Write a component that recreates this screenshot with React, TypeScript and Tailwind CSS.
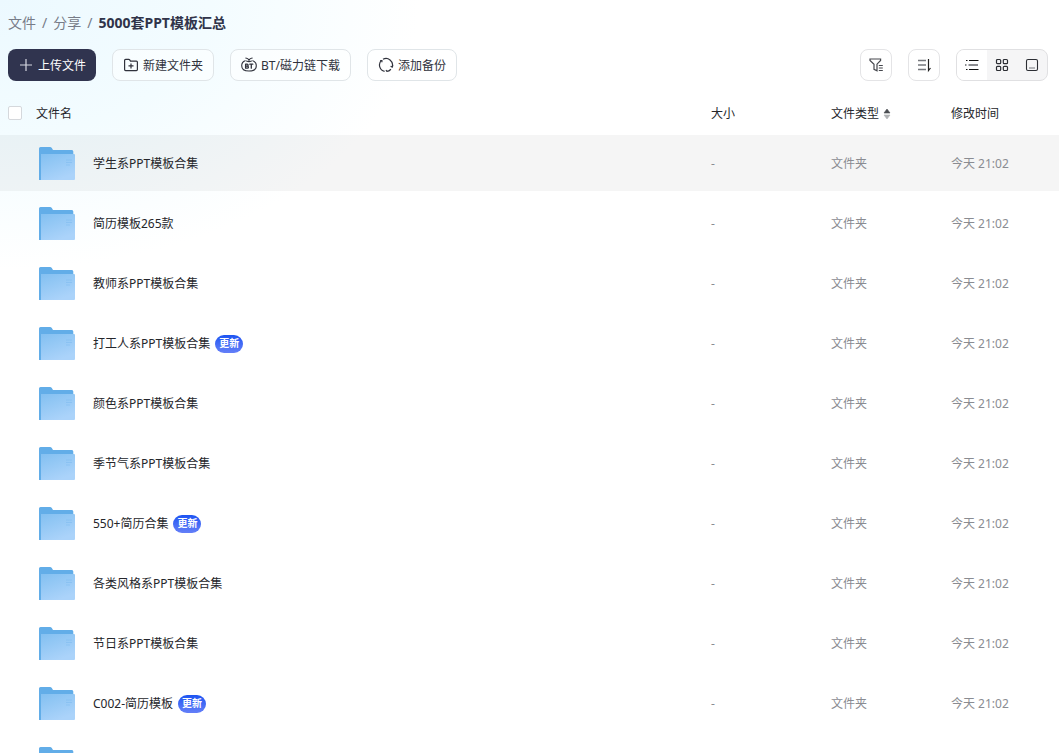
import { useState } from "react";

type FileItem = {
  id: number;
  name: string;
  size: string;
  type: string;
  time: string;
  updated?: boolean;
};

const folder = (id: number, name: string, updated = false): FileItem => ({
  id,
  name,
  size: "-",
  type: "文件夹",
  time: "今天 21:02",
  updated,
});

const FILES: FileItem[] = [
  folder(1, "学生系PPT模板合集"),
  folder(2, "简历模板265款"),
  folder(3, "教师系PPT模板合集"),
  folder(4, "打工人系PPT模板合集", true),
  folder(5, "颜色系PPT模板合集"),
  folder(6, "季节气系PPT模板合集"),
  folder(7, "550+简历合集", true),
  folder(8, "各类风格系PPT模板合集"),
  folder(9, "节日系PPT模板合集"),
  folder(10, "C002-简历模板", true),
  { id: 11, name: "", size: "", type: "", time: "" },
];

// --- 图标 ---

const PlusIcon = () => (
  <svg width="16" height="16" viewBox="0 0 16 16" fill="none" stroke="#d5d8e2" strokeWidth="1.2">
    <path d="M8 2v12M2 8h12" />
  </svg>
);

const NewFolderIcon = () => (
  <svg width="16" height="16" viewBox="0 0 16 16" fill="none" stroke="currentColor" strokeWidth="1.2">
    <path d="M1.6 12.6V3.4c0-.6.4-1 1-1h3.2c.4 0 .7.2.9.5l.8 1.2h5.9c.6 0 1 .4 1 1v7.5c0 .6-.4 1-1 1H2.6c-.6 0-1-.4-1-1z" />
    <path d="M8 6.4v5M5.5 8.9h5" />
  </svg>
);

const BtIcon = () => (
  <svg width="16" height="16" viewBox="0 0 16 16" fill="none" stroke="currentColor" strokeWidth="1.1" strokeLinecap="round">
    <path d="M4.8 1c1.4.2 2.4.8 3.200 1.900C8.800 1.800 9.800 1.200 11.200 1M8 3v1.200" />
    <path d="M4.200 3.800C2 4.600.7 6.500.7 8.700c0 3.300 2.800 5.300 7.300 5.300s7.300-2 7.300-5.300c0-2.200-1.300-4.100-3.500-4.900M5.600 4.100c1.500.7 3.300.7 4.800 0" />
    <path d="M4.600 7.200v4M4.600 7.200h1.500c1.400 0 1.400 1.900 0 1.900H4.600h1.700c1.500 0 1.500 2.100 0 2.100H4.600M8.800 7.200h3M10.300 7.200v4" strokeWidth="1.300" />
  </svg>
);

const BackupIcon = () => (
  <svg width="16" height="16" viewBox="0 0 16 16" fill="none" stroke="currentColor" strokeWidth="1.2">
    <path d="M6.600 14.350A6.500 6.500 0 0 1 3.400 3.400M5 2.240a6.500 6.500 0 0 1 9.300 7.400M12.900 12.250a6.500 6.500 0 0 1-4.300 2.200" />
    <path d="M2.200 3.500h1.700v1.700M14.900 8.300l-.7 1.800-1.600-.8M8 13l.9 1.500" />
  </svg>
);

const FilterIcon = () => (
  <svg width="16" height="16" viewBox="0 0 16 16" fill="none" stroke="#45474d" strokeWidth="1.2">
    <path d="M2 2h10.600v1.400L9 7.200v6.600L6 12.300V7.200L2 3.400z" />
    <path d="M10.800 8.500h4M10.800 11h4M10.800 13.500h4" />
  </svg>
);

const SortIcon = () => (
  <svg width="16" height="16" viewBox="0 0 16 16" fill="none">
    <path d="M2 3.500h8M2 8h8M2 12.500h8" stroke="#76787d" strokeWidth="1.300" />
    <path d="M12.500 2v11.500l2-2.500" stroke="#222" strokeWidth="1.200" />
  </svg>
);

const ListIcon = () => (
  <svg width="16" height="16" viewBox="0 0 16 16" fill="none" strokeWidth="1">
    <path d="M2 3.500h1.500M5 3.500h9.500M2 12.500h1.500M5 12.500h9.500" stroke="#111" />
    <path d="M1 8h1.500M4.500 8h9.500" stroke="#65676c" strokeWidth="1.300" />
  </svg>
);

const GridIcon = () => (
  <svg width="16" height="16" viewBox="0 0 16 16" fill="none" stroke="#2b2d33" strokeWidth="1.200">
    <rect x="2.500" y="2.500" width="4.200" height="4.200" rx="1" />
    <rect x="9.300" y="2.500" width="4.200" height="4.200" rx="1" />
    <rect x="2.500" y="9.300" width="4.200" height="4.200" rx="1" />
    <rect x="9.300" y="9.300" width="4.200" height="4.200" rx="1" />
  </svg>
);

const PreviewIcon = () => (
  <svg width="16" height="16" viewBox="0 0 16 16" fill="none" stroke="#2b2d33" strokeWidth="1.100">
    <rect x="2.500" y="2.500" width="11" height="11" rx="1.500" />
    <path d="M5 11h6" stroke="#75777c" />
  </svg>
);

const FolderIcon = () => (
  <svg className="shrink-0" width="36" height="34" viewBox="0 0 36 34">
    <defs>
      <linearGradient id="folderFront" x1="0" y1="0" x2="0.5" y2="1">
        <stop offset="0" stopColor="#83c0f1" />
        <stop offset="1" stopColor="#abd3fa" />
      </linearGradient>
    </defs>
    <path d="M0 33V1.500Q0 0 1.500 0H11Q12.200 0 12.800 1L14 3H33Q34.300 3 34.300 4.500V33H0z" fill="#62ade8" />
    <path d="M2 33V7H35Q36 7 36 8V32Q36 33 35 33H2z" fill="url(#folderFront)" />
    <path d="M27 13h6M27 15.500h6M27 18h4" stroke="#7ab8ee" strokeWidth=".5" />
  </svg>
);

const SorterIcon = () => (
  <svg width="8" height="12" viewBox="0 0 8 12">
    <path d="M4 1L7 5H1z" fill="#4b4d52" stroke="#4b4d52" strokeWidth=".6" strokeLinejoin="round" />
    <path d="M4 11L7 7H1z" fill="#b0b1b4" stroke="#b0b1b4" strokeWidth=".6" strokeLinejoin="round" />
  </svg>
);

const VIEWS = [
  { key: "list", label: "列表", Icon: ListIcon },
  { key: "grid", label: "网格", Icon: GridIcon },
  { key: "preview", label: "预览", Icon: PreviewIcon },
];

const ACTIONS = [
  { label: "新建文件夹", Icon: NewFolderIcon },
  { label: "BT/磁力链下载", Icon: BtIcon },
  { label: "添加备份", Icon: BackupIcon },
];

export default function App() {
  const [view, setView] = useState("list");
  const [activeId, setActiveId] = useState(1);

  return (
    <div
      lang="zh-CN"
      className="h-screen overflow-hidden bg-white bg-[radial-gradient(ellipse_420px_270px_at_0_0,#ecf9ff_0%,#f3fcff_50%,#ffffff_100%)] font-['Noto_Sans','Noto_Sans_CJK_SC',sans-serif] text-xs text-[#25262b]"
    >
      {/* 面包屑 */}
      <nav className="mb-[15px] flex h-[34px] items-center gap-[6px] pt-3 pl-2 text-sm text-[#777c88]">
        <a href="#files">文件</a>
        <span>/</span>
        <a href="#share">分享</a>
        <span>/</span>
        <h1 className="font-bold text-[#30344a]">5000套PPT模板汇总</h1>
      </nav>

      {/* 工具栏 */}
      <div className="mb-[10px] flex items-center justify-between pr-[11px] pl-2">
        <div className="flex gap-4">
          <button className="flex h-8 items-center gap-1 rounded-lg bg-[#30344f] px-[10px] text-white">
            <PlusIcon />
            <span className="pt-0.5">上传文件</span>
          </button>
          {ACTIONS.map(({ label, Icon }) => (
            <button
              key={label}
              className="flex h-8 items-center gap-1 rounded-lg border border-[#e0e5e8] bg-white/50 px-[10px] text-[#30323c]"
            >
              <Icon />
              <span className="pt-0.5">{label}</span>
            </button>
          ))}
        </div>

        <div className="flex gap-4">
          <button aria-label="筛选" className="flex size-8 items-center justify-center rounded-lg border border-[#e4e4e6] bg-white">
            <FilterIcon />
          </button>
          <button aria-label="排序" className="flex size-8 items-center justify-center rounded-lg border border-[#e4e4e6] bg-white">
            <SortIcon />
          </button>
          <div className="flex h-8 overflow-hidden rounded-lg border border-[#e0e0e2] bg-[#f5f5f6]">
            {VIEWS.map(({ key, label, Icon }) => (
              <button
                key={key}
                aria-label={label}
                onClick={() => setView(key)}
                className={`flex w-[30px] items-center justify-center ${view === key ? "bg-white" : ""}`}
              >
                <Icon />
              </button>
            ))}
          </div>
        </div>
      </div>

      {/* 文件列表 */}
      <table className="w-full table-fixed border-separate border-spacing-x-0 border-spacing-y-1 text-left">
        <colgroup>
          <col className="w-9" />
          <col />
          <col className="w-[120px]" />
          <col className="w-[120px]" />
          <col className="w-[108px]" />
        </colgroup>
        <thead>
          <tr className="h-9">
            <th className="pl-2">
              <input
                type="checkbox"
                aria-label="全选"
                className="block size-[14px] appearance-none rounded-xs border border-[#d5d8dc] bg-white"
              />
            </th>
            <th className="pt-0.5 font-normal">文件名</th>
            <th className="pt-0.5 font-normal">大小</th>
            <th className="pt-0.5 font-normal">
              <button className="flex items-center gap-1">
                文件类型
                <SorterIcon />
              </button>
            </th>
            <th className="pt-0.5 font-normal">修改时间</th>
          </tr>
        </thead>
        <tbody>
          {FILES.map((file) => (
            <tr
              key={file.id}
              onMouseEnter={() => setActiveId(file.id)}
              className={`h-14 text-[#8a8c92] ${activeId === file.id ? "bg-black/[0.04]" : ""}`}
            >
              <td />
              <td className="pt-0.5">
                <div className="flex items-center pl-[3px]">
                  <FolderIcon />
                  <span className="ml-[18px] text-[#25262b]">{file.name}</span>
                  {file.updated && (
                    <span className="ml-[5px] flex h-[18px] w-7 items-center justify-center rounded-full bg-linear-to-b from-[#1c54f2] to-[#647ff8] text-[10px] font-bold text-white">
                      更新
                    </span>
                  )}
                </div>
              </td>
              <td className="pt-0.5">{file.size}</td>
              <td className="pt-0.5">{file.type}</td>
              <td className="pt-0.5">{file.time}</td>
            </tr>
          ))}
        </tbody>
      </table>
    </div>
  );
}
